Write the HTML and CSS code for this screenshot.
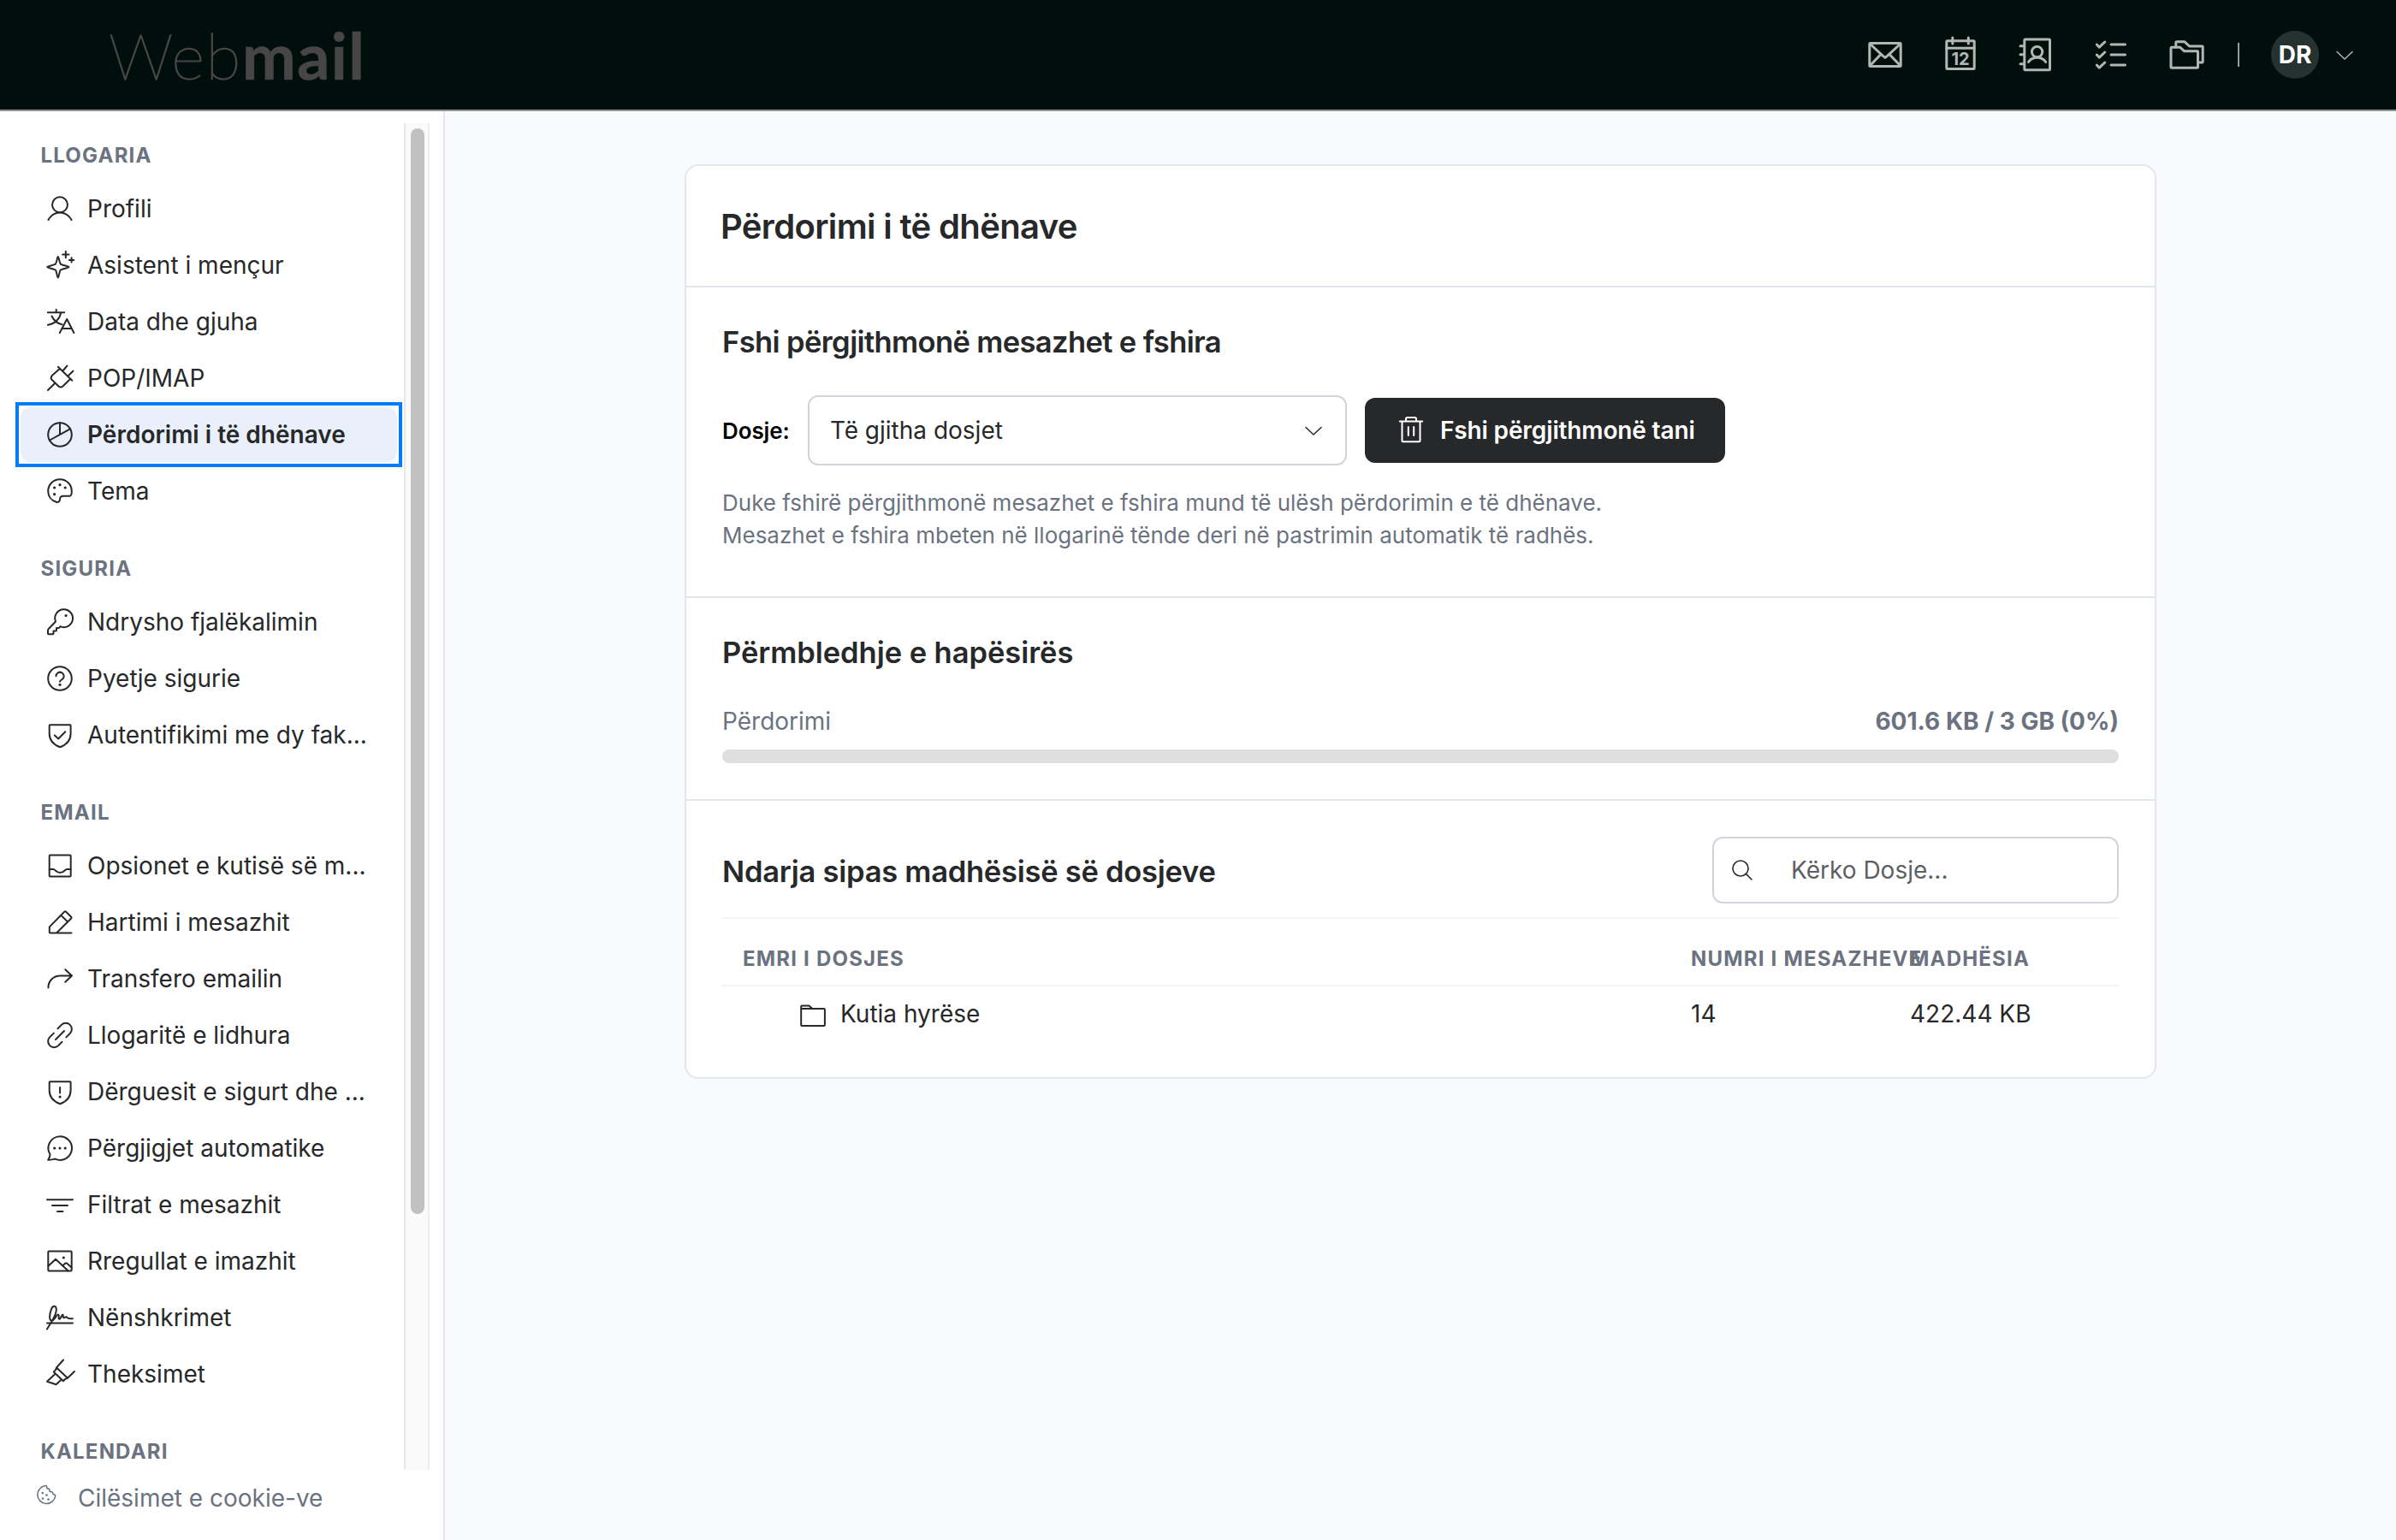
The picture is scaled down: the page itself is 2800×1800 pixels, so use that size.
FILE: index.html
```html
<!DOCTYPE html>
<html lang="sq">
<head>
  <meta charset="UTF-8">
  <title>Webmail</title>
  <meta name="viewport" content="width=device-width, initial-scale=1">
  <link rel="stylesheet" href="styles.css">
</head>
<body>

  <header class="topbar">
    <div class="logo"><span class="logo-thin">Web</span><span class="logo-bold">mail</span></div>
    <div class="top-icons">
      <svg class="top-icon" viewBox="0 0 40 40"><rect x="1.8" y="6.5" width="36.4" height="27" rx="1"/><path d="M2.5 7.5l15 13.8 2.5 2 2.5-2 15-13.8M2.5 32.5l12.5-13M37.5 32.5L25 19.5"/></svg>
      <svg class="top-icon" viewBox="0 0 40 40"><rect x="3.8" y="3.8" width="32.4" height="32.7" rx="1"/><path d="M3.8 12.3h32.4M10.8 0v7M29.3 0v7"/><text x="20" y="32" text-anchor="middle">12</text></svg>
      <svg class="top-icon" viewBox="0 0 40 40"><rect x="6.8" y="2" width="29.7" height="35.8" rx="1"/><path d="M2 9.7h4.5M2 19.7h4.5M2 30.7h4.5"/><circle cx="21.6" cy="16.6" r="6.2"/><path d="M11.5 28.5c2.2-3.3 6-5.3 10.1-5.3s7.9 2 10.1 5.3"/></svg>
      <svg class="top-icon" viewBox="0 0 40 40"><path d="M3.3 8l3 3.2L12.8 5M3.3 20l3 3.2 6.5-6.2M3.3 32l3 3.2 6.5-6.2M20 8h16.5M20 20h16.5M20 32h16.5"/></svg>
      <svg class="top-icon" viewBox="0 0 40 40"><path d="M2 12.200q0-1 1-1h9.500l5.200 4.600h15q.8 0 .8.800v17.700q0 1-1 1H3q-1 0-1-1z"/><path d="M7.800 11V6q0-1.200 1.200-1.200h9L23.500 10h15q.7 0 .7.800v17.400q0 .9-.9.900H34"/></svg>
    </div>
    <span class="divider"></span>
    <span class="avatar">DR</span>
    <svg class="top-chevron" viewBox="0 0 20 12"><path d="M1 1.500l9 8.500 9-8.500"/></svg>
  </header>

  <div class="layout">
    <aside class="sidebar">
      <div class="nav-wrap">
        <nav class="nav">
          <h4>LLOGARIA</h4>
          <ul>
            <li><a><svg class="icon" viewBox="0 0 32 32"><circle cx="16" cy="11.3" r="9"/><path d="M2.500 29c2.700-5.100 7.800-8.600 13.500-8.600S26.800 23.900 29.500 29"/></svg>Profili</a></li>
            <li><a><svg class="icon" viewBox="0 0 32 32"><path d="M13.800 6c1 0 1.600 7 2.900 8.500s9.900 2.600 9.900 3.600-8.300 2.100-9.800 3.500-2 9-3 9-1.500-7.600-3-9-9.600-2.500-9.600-3.500 8.300-2.200 9.700-3.600S12.800 6 13.800 6zM22.800-.2v7.400M19.100 3.400h7.400M29.600 7.200v5.400M26.900 10h5.400"/></svg>Asistent i mençur</a></li>
            <li><a><svg class="icon" viewBox="0 0 32 32"><path d="M11.700 1.700v3.600M1.800 5.300h19.400M17.200 5.300C16 12.500 10.500 18.500 2 19.800M6.500 9.500c2.200 4.800 6.300 8.500 12 9.800M15.800 29l8.400-16 8.200 16M18.500 24h11.400"/></svg>Data dhe gjuha</a></li>
            <li><a><svg class="icon" viewBox="0 0 32 32"><path d="M13.900 2.700l16.400 16M19.300 7.500l5.200-6M25.500 13.500l6-6M16 4.800L6.500 13.300q-1.700 2.200 0 4.400l8 7.800q2.400 2 4.900 0l8.900-8.800M2 30l7.600-7.500"/></svg>POP/IMAP</a></li>
            <li class="active"><a><svg class="icon" viewBox="0 0 32 32"><circle cx="16" cy="16" r="13.800"/><path d="M16 2v14M4.200 22.500L28 9.300"/></svg>Përdorimi i të dhënave</a></li>
            <li><a><svg class="icon" viewBox="0 0 32 32"><path d="M27.400 21.700h-7.200q-4.200 0-4.200 3.800c0 2.300-1.800 4.200-4.200 3.300C6 27 2.200 22 2.200 16a13.800 13.800 0 0 1 27.600 0c0 2.600 0 5.700-2.400 5.700z"/><g class="dots"><circle cx="9.6" cy="12" r="1.6"/><circle cx="16" cy="8.7" r="1.6"/><circle cx="22.2" cy="12" r="1.6"/><circle cx="9.6" cy="19.7" r="1.6"/></g></svg>Tema</a></li>
          </ul>

          <h4>SIGURIA</h4>
          <ul>
            <li><a><svg class="icon" viewBox="0 0 32 32"><path d="M16.500 21.200A10.400 10.400 0 1 0 11 15.500L2.800 24q-.8.800-.8 2v3.500q0 .8.800.8h4.900q.8 0 .8-.8v-3h2.700q.8 0 .8-.8v-2.600h2.200q.8 0 1.400-.7z"/><g class="dots"><circle cx="23.1" cy="8.5" r="1.6"/></g></svg>Ndrysho fjalëkalimin</a></li>
            <li><a><svg class="icon" viewBox="0 0 32 32"><circle cx="16" cy="16" r="13.800"/><path d="M11.500 13.300a4.600 4.600 0 1 1 7 3.900c-1.700 1-2.500 1.300-2.500 2.600"/><g class="dots"><circle cx="16" cy="23.3" r="1.6"/></g></svg>Pyetje sigurie</a></li>
            <li><a><svg class="icon" viewBox="0 0 32 32"><path d="M4.500 4.200h23.300q.8 0 .8.800v9.500c0 7.500-5 13-12.400 15.800C8.700 27.500 3.700 22 3.700 14.500V5q0-.8.800-.8zM9.800 16.500l4.400 4 8.100-8.200"/></svg>Autentifikimi me dy fak...</a></li>
          </ul>

          <h4>EMAIL</h4>
          <ul>
            <li><a><svg class="icon" viewBox="0 0 32 32"><rect x="3.7" y="3.5" width="25" height="25" rx="1"/><path d="M3.700 20h4.600c2.400 0 3 3.900 7.900 3.900s5.500-3.900 7.900-3.900h4.600"/></svg>Opsionet e kutisë së m...</a></li>
            <li><a><svg class="icon" viewBox="0 0 32 32"><path d="M29.500 28.500H4.700q-.9 0-.9-.9v-6.200L21.200 3.700q1-1 2 0l6 6q.8.900 0 1.800L12 28.500M17.200 7.600l7.900 7.900"/></svg>Hartimi i mesazhit</a></li>
            <li><a><svg class="icon" viewBox="0 0 32 32"><path d="M2.400 26.500c0-8 6-14 14-14H30M22.300 5.200l7.700 7.300-7.700 7.300"/></svg>Transfero emailin</a></li>
            <li><a><svg class="icon" viewBox="0 0 32 32"><path d="M13.500 8.200l4.300-4.300a7 7 0 0 1 10 10L23.300 18.400M18.500 23.800l-4.300 4.300a7 7 0 0 1-10-10L8.900 13.600M11 21l10-10"/></svg>Llogaritë e lidhura</a></li>
            <li><a><svg class="icon" viewBox="0 0 32 32"><path d="M4.500 4.200h23.300q.8 0 .8.800v9.500c0 7.500-5 13-12.400 15.800C8.700 27.500 3.700 22 3.700 14.500V5q0-.8.800-.8zM16.100 11v6.500"/><g class="dots"><circle cx="16.1" cy="22" r="1.6"/></g></svg>Dërguesit e sigurt dhe ...</a></li>
            <li><a><svg class="icon" viewBox="0 0 32 32"><path d="M4.500 23.300A13.800 13.800 0 1 1 10.500 28.600c-2.400.3-5 1.400-8.300 1.200 1.700-2.500 2.300-4 2.300-6.500z"/><g class="dots"><circle cx="9.7" cy="16" r="1.6"/><circle cx="16" cy="16" r="1.6"/><circle cx="22.2" cy="16" r="1.6"/></g></svg>Përgjigjet automatike</a></li>
            <li><a><svg class="icon" viewBox="0 0 32 32"><path d="M1 10.300h30M7 17h18M13 24h6.500"/></svg>Filtrat e mesazhit</a></li>
            <li><a><svg class="icon" viewBox="0 0 32 32"><rect x="2.3" y="4.5" width="27.4" height="23" rx="1"/><path d="M2.500 21.800l8.500-8 14.500 13.500M19 21.500l3.500-3q.8-.6 1.600 0l5.500 5"/><g class="dots"><circle cx="20.3" cy="12" r="1.6"/></g></svg>Rregullat e imazhit</a></li>
            <li><a><svg class="icon" viewBox="0 0 32 32"><path d="M1 22.400h30M.9 29.500C5 23 11.500 14 11.800 7.500c.2-6-4-6-5.900-1.200-2.300 6-2.600 13.400.6 13.400 3 0 6-8.500 7.800-7 1.500 1.300-.8 5 1 5s3-5.500 4-5.200c1.300.4-.5 3.800 1.600 3.800 1 0 1.500-1.300 2.500-1 1.200.4 1.500 1.900 4 2h3.500"/></svg>Nënshkrimet</a></li>
            <li><a><svg class="icon" viewBox="0 0 32 32"><path d="M20-.5L12 8.600q-.5 2.800-3.300 4.900L20 24.200q2-2.800 5-3.400l8-7.800M12 8.600l13 12.200M9.800 16.500L1 24.800l10.600 3.500 5.600-5.200"/></svg>Theksimet</a></li>
          </ul>

          <h4>KALENDARI</h4>
        </nav>
        <div class="track"><div class="thumb"></div></div>
      </div>
      <a class="cookie">
        <svg class="cookie-icon" viewBox="0 0 24 24"><path d="M11.500 1.500A10.500 10.500 0 1 0 22.800 13c.2-1-1.300-.8-2.200-1.300-1-.5-.7-2.200-1.600-2.800-.7-.6-2 0-2.700-.8-.7-.7 0-1.800-.7-2.500-.7-.8-2.300-.1-2.800-1.200-.4-1 .2-3-1.300-2.900z"/><g class="dots"><circle cx="7.8" cy="10" r="1.3"/><circle cx="12.5" cy="12.5" r="1.3"/><circle cx="8" cy="16.5" r="1.3"/><circle cx="14.5" cy="17.5" r="1.3"/></g></svg>
        Cilësimet e cookie-ve
      </a>
    </aside>

    <main class="main">
      <div class="card">
        <div class="card-title"><h1>Përdorimi i të dhënave</h1></div>

        <section class="purge">
          <h2>Fshi përgjithmonë mesazhet e fshira</h2>
          <div class="purge-row">
            <label>Dosje:</label>
            <div class="select">
              <span>Të gjitha dosjet</span>
              <svg class="chevron" viewBox="0 0 20 12"><path d="M1 1.500l9 8.500 9-8.500"/></svg>
            </div>
            <button class="btn">
              <svg class="trash" viewBox="0 0 28 32"><path d="M.8 6.500h26.400M3.500 6.500v22.700q0 1 1 1h19q1 0 1-1V6.500M8 6V3.500q0-1.500 1.500-1.500h9Q20 2 20 3.500V6M10.800 13v10M17.200 13v10"/></svg>
              Fshi përgjithmonë tani
            </button>
          </div>
          <p>Duke fshirë përgjithmonë mesazhet e fshira mund të ulësh përdorimin e të dhënave.<br>Mesazhet e fshira mbeten në llogarinë tënde deri në pastrimin automatik të radhës.</p>
        </section>

        <section class="summary">
          <h2>Përmbledhje e hapësirës</h2>
          <div class="usage">
            <span>Përdorimi</span>
            <strong>601.6 KB / 3 GB (0%)</strong>
          </div>
          <div class="bar"></div>
        </section>

        <section class="folders">
          <div class="folders-head">
            <h2>Ndarja sipas madhësisë së dosjeve</h2>
            <div class="search">
              <svg class="search-icon" viewBox="0 0 24 24"><circle cx="10" cy="10" r="9"/><path d="M16.400 16.400l6.600 6.600"/></svg>
              <span>Kërko Dosje...</span>
            </div>
          </div>
          <div class="row row-head">
            <span>EMRI I DOSJES</span>
            <span>NUMRI I MESAZHEVE</span>
            <span>MADHËSIA</span>
          </div>
          <div class="row">
            <span class="folder-name">
              <svg class="folder-icon" viewBox="0 0 30 26"><path d="M1.200 24V2.500q0-1 1-1h8.300L14.300 5H28q.9 0 .9.900V24q0 .9-.9.900H2.100q-.9 0-.9-.9zM1.200 5h13.100"/></svg>
              Kutia hyrëse
            </span>
            <span>14</span>
            <span>422.44 KB</span>
          </div>
        </section>
      </div>
    </main>
  </div>

</body>
</html>
```
FILE: styles.css
```css
* {
  box-sizing: border-box;
}

body {
  margin: 0;
  height: 100vh;
  display: flex;
  flex-direction: column;
  overflow: hidden;
  background: #f9fafc;
  color: #27282a;
  font-family: Inter, "Noto Sans", sans-serif;
  font-size: 28px;
}

h1, h2, h4, p, ul {
  margin: 0;
  padding: 0;
}

svg {
  display: block;
  flex: none;
  overflow: visible;
  fill: none;
  stroke: currentColor;
  stroke-width: 2;
  stroke-linecap: round;
  stroke-linejoin: round;
}

.dots {
  fill: currentColor;
  stroke: none;
}

/* top bar */

.topbar {
  height: 130px;
  flex: none;
  display: flex;
  align-items: center;
  padding: 0 50px 0 127px;
  background: #000f0b;
  border-bottom: 2px solid #8f9191;
}

.logo {
  font-family: Lato, sans-serif;
  font-size: 75px;
  line-height: 90px;
  color: #474546;
  padding-bottom: 1px;
  margin-right: auto;
}

.logo-thin {
  font-weight: 100;
  letter-spacing: 1.6px;
  -webkit-text-stroke: 1.4px #474546;
}

.logo-bold {
  font-weight: 700;
  letter-spacing: 1.5px;
  -webkit-text-stroke: 0.6px #474546;
}

.top-icons {
  display: flex;
  gap: 48px;
  color: #b2b6b5;
}

.top-icon {
  width: 40px;
  height: 40px;
  stroke-width: 3;
}

.top-icon text {
  font-size: 20px;
  font-weight: 700;
  fill: currentColor;
  stroke: none;
}

.divider {
  width: 2px;
  height: 28px;
  margin-left: 40px;
  background: #989a9a;
}

.avatar {
  width: 56px;
  height: 56px;
  margin-left: 37px;
  border-radius: 50%;
  background: #26322f;
  color: #fff;
  font-weight: 700;
  line-height: 56px;
  text-align: center;
}

.top-chevron {
  width: 20px;
  height: 12px;
  margin-left: 20px;
  margin-top: 2px;
  color: #b2b6b5;
  stroke-width: 1.5;
}

.layout {
  flex: 1;
  display: flex;
  min-height: 0;
}

/* sidebar */

.sidebar {
  width: 520px;
  flex: none;
  padding-top: 14px;
  background: #fff;
  border-right: 2px solid #e3e6ea;
}

.nav-wrap {
  height: 1574px;
  display: flex;
}

.nav {
  width: 472px;
  height: 100%;
  overflow: hidden;
  padding-top: 23px;
}

.nav h4 {
  margin: 0 0 15px 47.5px;
  font-size: 24px;
  font-weight: 700;
  line-height: 30px;
  letter-spacing: 1.2px;
  color: #6b7280;
}

.nav ul {
  list-style: none;
  margin: 0 8px 44px 24px;
  display: flex;
  flex-direction: column;
  gap: 2px;
}

.nav a {
  height: 64px;
  display: flex;
  align-items: center;
  gap: 16px;
  padding-left: 30px;
  border-radius: 12px;
  white-space: nowrap;
}

.nav .active {
  outline: 4px solid #007aff;
  outline-offset: 2px;
}

.nav .active a {
  background: #e9f0fc;
  font-weight: 600;
}

.icon {
  width: 32px;
  height: 32px;
}

.track {
  width: 30px;
  padding: 6px 0 0 6px;
  background: #fafafa;
  border-left: 2px solid #e8e8e8;
  border-right: 2px solid #ededed;
}

.thumb {
  width: 16px;
  height: 1269px;
  border-radius: 8px;
  background: #c1c1c1;
}

.cookie {
  display: flex;
  padding: 16px 0 0 42px;
  line-height: 34px;
  color: #6b7280;
}

.cookie-icon {
  width: 24px;
  height: 24px;
  margin: 1px 25px 0 0;
  stroke-width: 1.6;
}

/* content */

.main {
  flex: 1;
  padding-top: 62px;
}

.card {
  width: 1720px;
  height: 1069px;
  margin: 0 auto;
  background: #fff;
  border: 2px solid #e3e6ea;
  border-radius: 16px;
}

.card-title {
  height: 142px;
  padding: 0 40px;
  border-bottom: 2px solid #e3e6ea;
}

.card-title h1 {
  font-size: 40px;
  font-weight: 600;
  line-height: 142px;
  letter-spacing: -0.65px;
}

.card h2 {
  font-size: 34.5px;
  font-weight: 600;
  line-height: 46px;
  letter-spacing: -0.62px;
}

section {
  padding: 0 42px;
}

.purge {
  height: 363px;
  padding-top: 41px;
  border-bottom: 2px solid #e3e6ea;
}

.purge-row {
  display: flex;
  align-items: center;
  margin-top: 39px;
}

.purge-row label {
  width: 100px;
  font-size: 26px;
  font-weight: 600;
  letter-spacing: -0.1px;
  color: #000;
}

.select {
  width: 630px;
  height: 82px;
  display: flex;
  align-items: center;
  justify-content: space-between;
  padding: 0 27px 0 24px;
  border: 2px solid #d1d5db;
  border-radius: 12px;
}

.chevron {
  width: 20px;
  height: 12px;
  margin-top: 2px;
  stroke-width: 1.5;
}

.btn {
  height: 76px;
  margin-left: 21px;
  padding: 0 35px 0 40px;
  display: flex;
  align-items: center;
  gap: 20px;
  border: none;
  border-radius: 12px;
  background: #27282a;
  color: #fff;
  font: inherit;
  font-weight: 600;
  letter-spacing: -0.15px;
}

.trash {
  width: 28px;
  height: 32px;
  margin-top: -2px;
}

.purge p {
  margin-top: 25px;
  font-size: 26px;
  line-height: 38.4px;
  color: #6b7280;
}

.summary {
  height: 237px;
  padding-top: 41px;
  border-bottom: 2px solid #e3e6ea;
}

.summary h2 {
  letter-spacing: -0.05px;
}

.usage {
  display: flex;
  justify-content: space-between;
  margin-top: 40px;
  line-height: 34px;
  color: #6b7280;
}

.usage strong {
  font-weight: 700;
}

.bar {
  height: 16px;
  margin-top: 16px;
  border-radius: 8px;
  background: #dfdfdf;
}

.folders {
  padding-top: 42px;
}

.folders-head {
  height: 96px;
  display: flex;
  justify-content: space-between;
  border-bottom: 2px solid #f3f4f6;
}

.folders-head h2 {
  line-height: 81px;
  letter-spacing: -0.25px;
}

.search {
  width: 475px;
  height: 78px;
  display: flex;
  align-items: center;
  gap: 45px;
  padding-left: 21px;
  border: 2px solid #d1d5db;
  border-radius: 12px;
  color: #5d6063;
}

.search-icon {
  width: 24px;
  height: 24px;
  stroke-width: 1.6;
  color: #27282a;
}

.row {
  height: 64px;
  display: grid;
  grid-template-columns: 1108px 256px 1fr;
  align-items: center;
  padding-left: 24px;
  white-space: nowrap;
}

.row-head {
  height: 79px;
  padding-top: 15px;
  border-bottom: 2px solid #f3f4f6;
  font-size: 24px;
  font-weight: 700;
  letter-spacing: 1.2px;
  color: #6b7280;
}

.folder-name {
  display: flex;
  align-items: center;
  gap: 17px;
  padding-left: 67px;
}

.folder-icon {
  width: 30px;
  height: 26px;
  margin-top: 4px;
}
```
